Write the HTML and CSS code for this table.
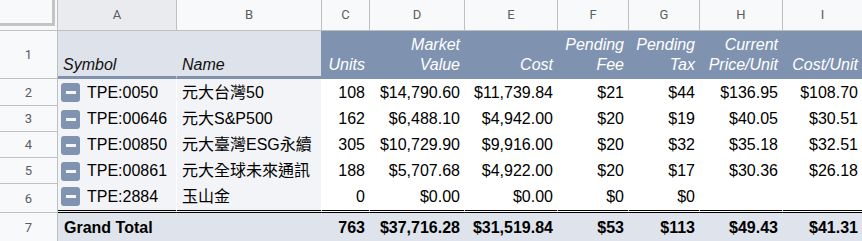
FILE: index.html
```html
<!DOCTYPE html>
<html lang="zh-Hant">
<head>
<meta charset="utf-8">
<title>Portfolio</title>
<link rel="stylesheet" href="styles.css">
</head>
<body>
<div class="sheet">
  <!-- column header row -->
  <div class="corner"><div class="freeze"></div></div>
  <div class="ch ch-first ch-sel">A</div>
  <div class="ch">B</div>
  <div class="ch">C</div>
  <div class="ch">D</div>
  <div class="ch">E</div>
  <div class="ch">F</div>
  <div class="ch">G</div>
  <div class="ch">H</div>
  <div class="ch">I</div>

  <!-- row 1 -->
  <div class="rh rh-head">1</div>
  <div class="hd hd-light first">Symbol</div>
  <div class="hd hd-light">Name</div>
  <div class="hd hd-blue num">Units</div>
  <div class="hd hd-blue num">Market<br>Value</div>
  <div class="hd hd-blue num">Cost</div>
  <div class="hd hd-blue num">Pending<br>Fee</div>
  <div class="hd hd-blue num">Pending<br>Tax</div>
  <div class="hd hd-blue num">Current<br>Price/Unit</div>
  <div class="hd hd-blue num">Cost/Unit</div>

  <!-- row 2 -->
  <div class="rh">2</div>
  <div class="td td-sym first"><span class="minus"></span>TPE:0050</div>
  <div class="td td-name">元大台灣50</div>
  <div class="td num">108</div>
  <div class="td num">$14,790.60</div>
  <div class="td num">$11,739.84</div>
  <div class="td num">$21</div>
  <div class="td num">$44</div>
  <div class="td num">$136.95</div>
  <div class="td num">$108.70</div>

  <!-- row 3 -->
  <div class="rh">3</div>
  <div class="td td-sym first"><span class="minus"></span>TPE:00646</div>
  <div class="td td-name">元大S&amp;P500</div>
  <div class="td num">162</div>
  <div class="td num">$6,488.10</div>
  <div class="td num">$4,942.00</div>
  <div class="td num">$20</div>
  <div class="td num">$19</div>
  <div class="td num">$40.05</div>
  <div class="td num">$30.51</div>

  <!-- row 4 -->
  <div class="rh">4</div>
  <div class="td td-sym first"><span class="minus"></span>TPE:00850</div>
  <div class="td td-name">元大臺灣ESG永續</div>
  <div class="td num">305</div>
  <div class="td num">$10,729.90</div>
  <div class="td num">$9,916.00</div>
  <div class="td num">$20</div>
  <div class="td num">$32</div>
  <div class="td num">$35.18</div>
  <div class="td num">$32.51</div>

  <!-- row 5 -->
  <div class="rh">5</div>
  <div class="td td-sym first"><span class="minus"></span>TPE:00861</div>
  <div class="td td-name">元大全球未來通訊</div>
  <div class="td num">188</div>
  <div class="td num">$5,707.68</div>
  <div class="td num">$4,922.00</div>
  <div class="td num">$20</div>
  <div class="td num">$17</div>
  <div class="td num">$30.36</div>
  <div class="td num">$26.18</div>

  <!-- row 6 -->
  <div class="rh">6</div>
  <div class="td td-sym first last"><span class="minus"></span>TPE:2884</div>
  <div class="td td-name last">玉山金</div>
  <div class="td num last">0</div>
  <div class="td num last">$0.00</div>
  <div class="td num last">$0.00</div>
  <div class="td num last">$0</div>
  <div class="td num last">$0</div>
  <div class="td num last"></div>
  <div class="td num last"></div>

  <!-- row 7 -->
  <div class="rh">7</div>
  <div class="tot first">Grand Total</div>
  <div class="tot"></div>
  <div class="tot num">763</div>
  <div class="tot num">$37,716.28</div>
  <div class="tot num">$31,519.84</div>
  <div class="tot num">$53</div>
  <div class="tot num">$113</div>
  <div class="tot num">$49.43</div>
  <div class="tot num">$41.31</div>
</div>
</body>
</html>
```

FILE: styles.css
```css
* {
  box-sizing: border-box;
}

html, body {
  margin: 0;
  padding: 0;
  background: #ffffff;
  overflow: hidden;
}

.sheet {
  display: grid;
  grid-template-columns: 58px 118px 145px 48px 95px 93px 71px 71px 83px 80px;
  grid-template-rows: 31px 48px 27px 26px 26px 26px 29px 30px;
  width: 862px;
  font-family: "Liberation Sans", Arial, "Noto Sans CJK TC", sans-serif;
  font-size: 16px;
  color: #000;
}

/* column header row */
.corner {
  background: #f8f9fa;
  border-right: 1px solid #c0c0c0;
  border-bottom: 1px solid #c0c0c0;
}

.freeze {
  width: 55px;
  height: 26px;
  border-right: 3px solid #c4c4c4;
  border-bottom: 3px solid #c4c4c4;
}

.ch {
  display: flex;
  align-items: center;
  justify-content: center;
  background: #f8f9fa;
  border-left: 1px solid #c0c0c0;
  border-bottom: 1px solid #c0c0c0;
  font-family: Roboto, "Liberation Sans", sans-serif;
  font-size: 13px;
  color: #5a5d61;
  padding-bottom: 1px;
}

.ch-first {
  border-left: none;
}

.ch-sel {
  background: #e9ebee;
}

/* row numbers */
.rh {
  display: flex;
  align-items: center;
  justify-content: center;
  background: #f8f9fa;
  border-right: 1px solid #c0c0c0;
  border-bottom: 1px solid #c0c0c0;
  font-family: Roboto, "Liberation Sans", sans-serif;
  font-size: 13px;
  color: #5a5d61;
}

/* header row 1 */
.hd {
  display: flex;
  align-items: flex-end;
  padding: 0 4px 1px 5px;
  line-height: 20px;
  font-style: italic;
  border-bottom: 3px solid #7f93b1;
}

.hd-light {
  background: #dee2ea;
  border-left: 1px solid #dee2ea;
  color: #111;
}

.hd-blue {
  background: #7f93b1;
  border-left: 1px solid #7f93b1;
  color: #ffffff;
}

.hd.num {
  justify-content: flex-end;
  text-align: right;
}

/* data rows */
.td {
  display: flex;
  align-items: center;
  padding: 0 4px 0 5px;
  line-height: 20px;
  white-space: nowrap;
  background: #ffffff;
  border-left: 1px solid #ffffff;
}

.td.num {
  justify-content: flex-end;
}

.td-sym,
.td-name {
  background: #f3f4f7;
}

.td-sym {
  padding-left: 3px;
  gap: 7px;
}

.first {
  border-left: none;
}

.last {
  border-bottom: 3px double #000;
  padding-bottom: 1px;
}

.minus {
  display: flex;
  align-items: center;
  justify-content: center;
  width: 19px;
  height: 19px;
  border-radius: 3px;
  background: #8094b1;
  flex: none;
}

.minus::before {
  content: "";
  display: block;
  width: 10px;
  height: 3px;
  background: #f4f6f9;
}

/* totals */
.tot {
  display: flex;
  align-items: center;
  padding: 0 4px 0 5px;
  background: #dfe3eb;
  border-left: 1px solid #dfe3eb;
  font-weight: bold;
  white-space: nowrap;
}

.tot.num {
  justify-content: flex-end;
}
```
